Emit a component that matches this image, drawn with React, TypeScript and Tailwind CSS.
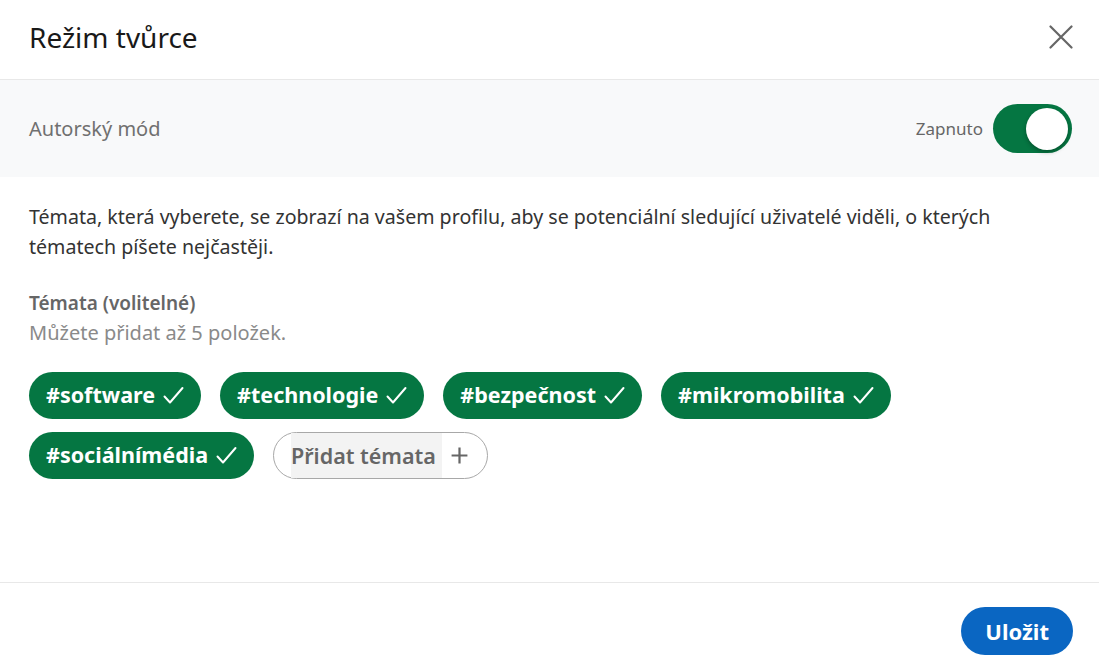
import React from "react";

const Check = () => (
  <svg width="21" height="20" viewBox="0 0 21 20" fill="none" className="ml-[8px]">
    <path d="M1.5 10.5l5.5 6L19.5 2" stroke="white" strokeWidth="2" strokeLinecap="round" strokeLinejoin="round" />
  </svg>
);

const Chip = ({ label }: { label: string }) => (
  <div className="flex items-center h-[47px] px-[17px] rounded-full bg-[#057642] text-white font-bold text-[21.5px]">
    <span>{label}</span>
    <Check />
  </div>
);

export default function App() {
  return (
    <div className="w-[1099px] h-[669px] bg-white flex flex-col text-[rgba(0,0,0,0.9)]" style={{ fontFamily: '"Noto Sans", "Open Sans", sans-serif' }}>
      <div className="h-[80px] border-b border-[#e8e8e8] flex items-center justify-between pl-[29px] pr-[26px] pb-[6px] shrink-0">
        <h1 className="text-[28px] text-[#191919]">Režim tvůrce</h1>
        <svg width="24" height="24" viewBox="0 0 24 24" fill="none">
          <path d="M1.5 1.5L22.5 22.5M22.5 1.5L1.5 22.5" stroke="#666666" strokeWidth="2.2" strokeLinecap="round" />
        </svg>
      </div>
      <div className="h-[97px] bg-[#f8f9fa] flex items-center justify-between pl-[29px] pr-[27px] shrink-0">
        <span className="text-[20px] text-[#707070]">Autorský mód</span>
        <div className="flex items-center gap-[10px]">
          <span className="text-[17px] text-[#666666]">Zapnuto</span>
          <div className="w-[79px] h-[49px] rounded-full bg-[#057642] flex items-center justify-end pr-[4px]">
            <div className="w-[42px] h-[42px] rounded-full bg-white shadow-[0_2px_4px_rgba(0,0,0,0.3)]" />
          </div>
        </div>
      </div>
      <div className="flex-1 pl-[29px] pr-[24px] pt-[25px]">
        <p className="text-[19.6px] leading-[30px] text-[#333333]">
          Témata, která vyberete, se zobrazí na vašem profilu, aby se potenciální sledující uživatelé viděli, o kterých tématech píšete nejčastěji.
        </p>
        <div className="mt-[26px] text-[19px] font-semibold text-[#666666] leading-[30px]">Témata (volitelné)</div>
        <div className="text-[20px] text-[#8a8a8a] leading-[30px]">Můžete přidat až 5 položek.</div>
        <div className="mt-[24px] flex flex-wrap gap-x-[19px] gap-y-[13px]">
          <Chip label="#software" />
          <Chip label="#technologie" />
          <Chip label="#bezpečnost" />
          <Chip label="#mikromobilita" />
          <Chip label="#sociálnímédia" />
          <div className="flex items-center h-[47px] pl-[17px] pr-[18px] rounded-full border border-[#a8a8a8] text-[21.5px] font-semibold text-[#666666]">
            <span className="bg-[#f3f3f3] pr-[6px] leading-[45px]">Přidat témata</span>
            <svg width="19" height="19" viewBox="0 0 24 24" fill="none" className="ml-[8px]">
              <path d="M12 2v20M2 12h20" stroke="#666666" strokeWidth="2.8" />
            </svg>
          </div>
        </div>
      </div>
      <div className="h-[87px] border-t border-[#e8e8e8] flex items-start justify-end pr-[26px] pt-[24px] shrink-0">
        <button className="h-[48px] px-[24px] rounded-full bg-[#0a66c2] text-white font-bold text-[22px]">Uložit</button>
      </div>
    </div>
  );
}
